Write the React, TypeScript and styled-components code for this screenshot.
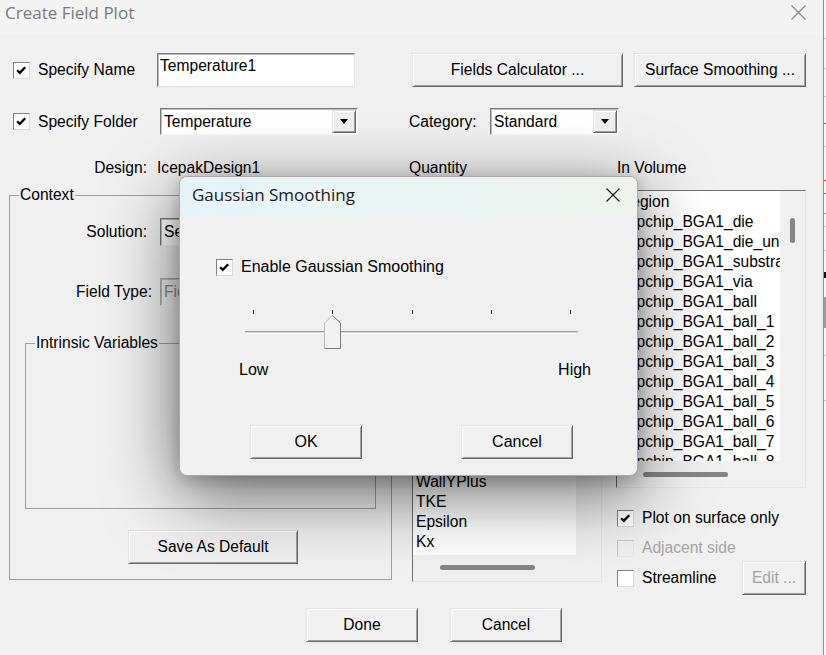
import React from "react";
import styled, { createGlobalStyle } from "styled-components";

const FONT = `"Liberation Sans", Arial, Helvetica, sans-serif`;
const TITLE_FONT = `"Open Sans", "Noto Sans", sans-serif`;

const GlobalStyle = createGlobalStyle`
  *, *::before, *::after { box-sizing: border-box; }
  html, body { margin: 0; padding: 0; background: #f0f0f0; }
  body { font-family: ${FONT}; }
`;

const Screen = styled.div`
  position: relative;
  width: 826px;
  height: 655px;
  display: flex;
  overflow: hidden;
  font-family: ${FONT};
  font-size: 15.6px;
  color: #000;
`;

const Window = styled.div`
  width: 824px;
  height: 100%;
  flex: none;
  display: flex;
  flex-direction: column;
  background: #f0f0f0;
  border-right: 1px solid #8e8e8e;
`;

const Backdrop = styled.svg`
  display: block;
  flex: none;
  background: #f7f7f7;
`;

const TitleBar = styled.div`
  flex: none;
  height: 35px;
  display: flex;
  align-items: flex-start;
  justify-content: space-between;
  padding: 2px 17px 0 5px;
  background: #f3f3f3;
`;

const WindowTitle = styled.div`
  font-family: ${TITLE_FONT};
  font-size: 17px;
  line-height: 22px;
  color: #7a7a7a;
`;

const XIcon = styled.svg<{ $mt?: number }>`
  display: block;
  flex: none;
  margin-top: ${(p) => p.$mt ?? 0}px;
`;

const Body = styled.div`
  flex: 1;
  display: flex;
  flex-direction: column;
`;

const Row = styled.div<{ $mt: number; $h: number; $pl?: number }>`
  flex: none;
  display: flex;
  align-items: center;
  height: ${(p) => p.$h}px;
  margin-top: ${(p) => p.$mt}px;
  padding-left: ${(p) => p.$pl ?? 0}px;
`;

const CheckField = styled.label<{ $w?: number; $ml?: number; $disabled?: boolean }>`
  flex: none;
  display: flex;
  align-items: center;
  gap: 8px;
  width: ${(p) => (p.$w ? `${p.$w}px` : "auto")};
  margin-left: ${(p) => p.$ml ?? 0}px;
  color: ${(p) => (p.$disabled ? "#a3a3a3" : "#000")};
  line-height: 18px;
  white-space: nowrap;
`;

const Box = styled.span<{ $disabled?: boolean }>`
  flex: none;
  width: 17px;
  height: 17px;
  display: flex;
  align-items: center;
  justify-content: center;
  background: ${(p) => (p.$disabled ? "#f0f0f0" : "#fff")};
  border: 1px solid;
  border-color: ${(p) =>
    p.$disabled ? "#c6c6c6 #e6e6e6 #e6e6e6 #c6c6c6" : "#828282 #dadada #dadada #828282"};
`;

const TextBox = styled.div<{ $w: number }>`
  flex: none;
  width: ${(p) => p.$w}px;
  height: 34px;
  background: #fff;
  border: 1px solid;
  border-color: #7a7a7a #e3e3e3 #e3e3e3 #7a7a7a;
  box-shadow: inset 1px 1px 0 #b9b9b9;
  padding: 3px 0 0 2px;
  line-height: 18px;
  white-space: nowrap;
`;

const Combo = styled.div<{ $w: number; $h: number; $ml?: number; $disabled?: boolean }>`
  flex: none;
  display: flex;
  width: ${(p) => p.$w}px;
  height: ${(p) => p.$h}px;
  margin-left: ${(p) => p.$ml ?? 0}px;
  padding: 1px;
  background: ${(p) => (p.$disabled ? "#f0f0f0" : "#fff")};
  border: 1px solid;
  border-color: ${(p) =>
    p.$disabled ? "#a8a8a8 #f4f4f4 #f4f4f4 #a8a8a8" : "#7a7a7a #f6f6f6 #f6f6f6 #7a7a7a"};
  box-shadow: inset 1px 1px 0 #bdbdbd;
`;

const ComboText = styled.span<{ $disabled?: boolean }>`
  flex: 1;
  display: flex;
  align-items: center;
  padding-left: 2px;
  overflow: hidden;
  white-space: nowrap;
  color: ${(p) => (p.$disabled ? "#8c8c8c" : "#000")};
`;

const DropButton = styled.span`
  flex: none;
  width: 24px;
  display: flex;
  align-items: center;
  justify-content: center;
  background: #f0f0f0;
  border: 1px solid;
  border-color: #e3e3e3 #696969 #696969 #e3e3e3;
  box-shadow: inset 1px 1px 0 #fff, inset -1px -1px 0 #a0a0a0;
`;

const Triangle = styled.span`
  width: 0;
  height: 0;
  border-left: 4px solid transparent;
  border-right: 4px solid transparent;
  border-top: 5px solid #000;
`;

const PushButton = styled.button<{
  $w: number;
  $ml?: number | "auto";
  $mt?: number;
  $disabled?: boolean;
}>`
  flex: none;
  width: ${(p) => p.$w}px;
  height: 34px;
  margin-top: ${(p) => p.$mt ?? 0}px;
  margin-left: ${(p) => (p.$ml === "auto" ? "auto" : `${p.$ml ?? 0}px`)};
  padding: 0;
  font-family: ${FONT};
  font-size: inherit;
  color: ${(p) => (p.$disabled ? "#a3a3a3" : "#000")};
  background: #f0f0f0;
  border: 1px solid;
  border-color: #e3e3e3 #696969 #696969 #e3e3e3;
  box-shadow: inset 1px 1px 0 #fff, inset -1px -1px 0 #a0a0a0;
  white-space: nowrap;
`;

const Text = styled.span<{ $w?: number; $ml?: number; $align?: "left" | "right"; $pr?: number }>`
  flex: none;
  width: ${(p) => (p.$w ? `${p.$w}px` : "auto")};
  margin-left: ${(p) => p.$ml ?? 0}px;
  padding-right: ${(p) => p.$pr ?? 0}px;
  text-align: ${(p) => p.$align ?? "left"};
  line-height: 18px;
  white-space: nowrap;
`;

const Main = styled.div`
  flex: none;
  display: flex;
  align-items: flex-start;
  height: 408px;
  margin-top: 8px;
`;

const Group = styled.fieldset<{ $w: number; $h: number; $ml: number; $mt: number }>`
  flex: none;
  margin: ${(p) => p.$mt}px 0 0 ${(p) => p.$ml}px;
  padding: 0;
  min-width: 0;
  width: ${(p) => p.$w}px;
  height: ${(p) => p.$h}px;
  border: 1px solid #a0a0a0;
  display: flex;
  flex-direction: column;
  align-items: flex-start;
`;

const Legend = styled.legend`
  margin-left: 9px;
  padding: 0 1px;
  font-size: 15.6px;
  line-height: 18px;
`;

const ListBox = styled.div<{ $h: number; $ml?: number; $mt?: number }>`
  flex: none;
  display: grid;
  grid-template-columns: 1fr 25px;
  grid-template-rows: 1fr 26px;
  width: 190px;
  height: ${(p) => p.$h}px;
  margin: ${(p) => p.$mt ?? 0}px 0 0 ${(p) => p.$ml ?? 0}px;
  background: #f0f0f0;
  border: 1px solid;
  border-color: #6d6d6d #e6e6e6 #e6e6e6 #6d6d6d;
`;

const ListContent = styled.div`
  background: #fff;
  overflow: hidden;
  padding: 1px 0 0 3px;
  line-height: 20px;
  white-space: nowrap;
`;

const Track = styled.div`
  min-width: 0;
  min-height: 0;
`;

const Thumb = styled.div<{ $w: number; $h: number; $ml: number; $mt: number }>`
  width: ${(p) => p.$w}px;
  height: ${(p) => p.$h}px;
  margin: ${(p) => p.$mt}px 0 0 ${(p) => p.$ml}px;
  border-radius: 3px;
  background: #858585;
`;

const RightColumn = styled.div`
  flex: none;
  width: 190px;
  margin: 4px 0 0 14px;
  display: flex;
  flex-direction: column;
`;

/* ---------- modal ---------- */

const Modal = styled.div`
  position: absolute;
  left: 179px;
  top: 176px;
  width: 459px;
  height: 300px;
  display: flex;
  flex-direction: column;
  font-size: 16px;
  background: #f0f0f0;
  border: 1px solid #a9a9a9;
  border-radius: 8px;
  overflow: hidden;
  box-shadow: 0 18px 70px rgba(0, 0, 0, 0.58), 0 4px 16px rgba(0, 0, 0, 0.2);
`;

const ModalTitle = styled.div`
  flex: none;
  height: 40px;
  display: flex;
  align-items: center;
  justify-content: space-between;
  padding: 0 17px 5px 12px;
  background: linear-gradient(90deg, #e5f3f7 0%, #eaf4f3 55%, #eff3ee 100%);
`;

const ModalTitleText = styled.div`
  font-family: ${TITLE_FONT};
  font-size: 17px;
  line-height: 22px;
  color: #1b1b1b;
`;

const ModalBody = styled.div`
  flex: 1;
  display: flex;
  flex-direction: column;
`;

const Slider = styled.div`
  position: relative;
  flex: none;
  width: 352px;
  margin: 33px 0 0 59px;
`;

const Ticks = styled.div`
  display: flex;
  justify-content: space-between;
  height: 4px;
  padding: 0 20px 0 14px;
`;

const Tick = styled.span`
  width: 1px;
  height: 4px;
  background: #333;
`;

const Groove = styled.div`
  width: 333px;
  height: 3px;
  margin: 17px 0 0 6px;
  background: #d6d6d6;
  border-top: 1px solid #9c9c9c;
  border-bottom: 1px solid #fff;
`;

const SliderThumb = styled.svg`
  position: absolute;
  left: 85px;
  top: 5px;
  display: block;
`;

const ScaleLabels = styled.div`
  flex: none;
  display: flex;
  justify-content: space-between;
  width: 352px;
  margin: 27px 0 0 59px;
  line-height: 18px;
`;

/* ---------- parts ---------- */

function Close({ size, color, mt }: { size: number; color: string; mt?: number }) {
  return (
    <XIcon $mt={mt} width={size} height={size} viewBox={`0 0 ${size} ${size}`}>
      <path
        d={`M0.5 0.5 L${size - 0.5} ${size - 0.5} M${size - 0.5} 0.5 L0.5 ${size - 0.5}`}
        stroke={color}
        strokeWidth="1.2"
        fill="none"
      />
    </XIcon>
  );
}

function Check({
  label,
  checked,
  disabled,
  w,
  ml,
}: {
  label: string;
  checked?: boolean;
  disabled?: boolean;
  w?: number;
  ml?: number;
}) {
  return (
    <CheckField $w={w} $ml={ml} $disabled={disabled}>
      <Box $disabled={disabled}>
        {checked && (
          <svg width="15" height="15" viewBox="0 0 15 15">
            <path d="M3.2 7.2 L5.8 9.8 L11.2 4.2" fill="none" stroke="#000" strokeWidth="2.3" />
          </svg>
        )}
      </Box>
      {label}
    </CheckField>
  );
}

function Select({
  value,
  w,
  h,
  ml,
  disabled,
}: {
  value: string;
  w: number;
  h: number;
  ml?: number;
  disabled?: boolean;
}) {
  return (
    <Combo $w={w} $h={h} $ml={ml} $disabled={disabled}>
      <ComboText $disabled={disabled}>{value}</ComboText>
      <DropButton>
        <Triangle />
      </DropButton>
    </Combo>
  );
}

const quantities = [
  "Temperature",
  "Pressure",
  "Speed",
  "Vector_Velocity",
  "X_Velocity",
  "Y_Velocity",
  "Z_Velocity",
  "Heat_Flux",
  "Heat_Tr_Coeff",
  "Surf_Heat_Flux",
  "Viscosity_Ratio",
  "Wall_Temperature",
  "Mesh_Quality",
  "Heat_Flow",
  "WallYPlus",
  "TKE",
  "Epsilon",
  "Kx",
];

const volumes = [
  "Region",
  "Flipchip_BGA1_die",
  "Flipchip_BGA1_die_underfill",
  "Flipchip_BGA1_substrate",
  "Flipchip_BGA1_via",
  "Flipchip_BGA1_ball",
  "Flipchip_BGA1_ball_1",
  "Flipchip_BGA1_ball_2",
  "Flipchip_BGA1_ball_3",
  "Flipchip_BGA1_ball_4",
  "Flipchip_BGA1_ball_5",
  "Flipchip_BGA1_ball_6",
  "Flipchip_BGA1_ball_7",
  "Flipchip_BGA1_ball_8",
  "Flipchip_BGA1_ball_9",
];

export default function App() {
  return (
    <>
      <GlobalStyle />
      <Screen>
        <Window>
          <TitleBar>
            <WindowTitle>Create Field Plot</WindowTitle>
            <Close size={15} color="#8a8a8a" mt={3} />
          </TitleBar>
          <Body>
            <Row $mt={18} $h={34}>
              <Check label="Specify Name" checked w={144} ml={13} />
              <TextBox $w={198}>Temperature1</TextBox>
              <PushButton $w={211} $ml={57}>
                Fields Calculator ...
              </PushButton>
              <PushButton $w={172} $ml={11}>
                Surface Smoothing ...
              </PushButton>
            </Row>
            <Row $mt={21} $h={27}>
              <Check label="Specify Folder" checked w={147} ml={13} />
              <Select value="Temperature" w={198} h={27} />
              <Text $w={81} $ml={51}>
                Category:
              </Text>
              <Select value="Standard" w={129} h={27} />
            </Row>
            <Row $mt={23} $h={20}>
              <Text $w={147} $align="right">
                Design:
              </Text>
              <Text $w={252} $ml={10}>
                IcepakDesign1
              </Text>
              <Text $w={208}>Quantity</Text>
              <Text>In Volume</Text>
            </Row>
            <Main>
              <Group $w={383} $h={394} $ml={9} $mt={0}>
                <Legend>Context</Legend>
                <Row $mt={14} $h={28}>
                  <Text $w={150} $align="right" $pr={13}>
                    Solution:
                  </Text>
                  <Select value="Setup1 : SteadyState" w={216} h={28} />
                </Row>
                <Row $mt={32} $h={28}>
                  <Text $w={150} $align="right" $pr={8}>
                    Field Type:
                  </Text>
                  <Select value="Fields" w={216} h={28} disabled />
                </Row>
                <Group $w={351} $h={175} $ml={15} $mt={28}>
                  <Legend>Intrinsic Variables</Legend>
                </Group>
                <PushButton $w={170} $ml={118} $mt={21}>
                  Save As Default
                </PushButton>
              </Group>

              <ListBox $h={392} $ml={20} $mt={4}>
                <ListContent>
                  {quantities.map((q) => (
                    <div key={q}>{q}</div>
                  ))}
                </ListContent>
                <Track>
                  <Thumb $w={5} $h={25} $ml={10} $mt={4} />
                </Track>
                <Track>
                  <Thumb $w={95} $h={5} $ml={27} $mt={10} />
                </Track>
                <Track />
              </ListBox>

              <RightColumn>
                <ListBox $h={298}>
                  <ListContent>
                    {volumes.map((v) => (
                      <div key={v}>{v}</div>
                    ))}
                  </ListContent>
                  <Track>
                    <Thumb $w={5} $h={25} $ml={10} $mt={27} />
                  </Track>
                  <Track>
                    <Thumb $w={85} $h={5} $ml={26} $mt={11} />
                  </Track>
                  <Track />
                </ListBox>
                <Row $mt={15} $h={30}>
                  <Check label="Plot on surface only" checked ml={1} />
                </Row>
                <Row $mt={0} $h={30}>
                  <Check label="Adjacent side" disabled ml={1} />
                </Row>
                <Row $mt={0} $h={30}>
                  <Check label="Streamline" ml={1} />
                  <PushButton $w={64} $ml="auto" $disabled>
                    Edit ...
                  </PushButton>
                </Row>
              </RightColumn>
            </Main>
            <Row $mt={14} $h={34} $pl={306}>
              <PushButton $w={112}>Done</PushButton>
              <PushButton $w={112} $ml={32}>
                Cancel
              </PushButton>
            </Row>
          </Body>
        </Window>
        <Backdrop width="2" height="655" viewBox="0 0 2 655">
          <g fill="#c4c4c4">
            <rect x="0" y="38" width="2" height="1" />
            <rect x="0" y="68" width="2" height="1" />
            <rect x="0" y="96" width="2" height="1" />
            <rect x="0" y="146" width="2" height="1" />
            <rect x="0" y="226" width="2" height="1" />
            <rect x="0" y="250" width="2" height="1" />
            <rect x="0" y="355" width="2" height="1" />
            <rect x="0" y="400" width="2" height="1" />
          </g>
          <g fill="#d23a3a">
            <rect x="0" y="123" width="2" height="1" />
            <rect x="0" y="180" width="2" height="1" />
            <rect x="0" y="193" width="2" height="1" />
          </g>
          <rect x="0" y="213" width="2" height="1" fill="#6bb36b" />
          <rect x="0" y="272" width="2" height="6" fill="#111" />
          <rect x="0" y="297" width="2" height="31" fill="#9c9c9c" />
        </Backdrop>

        <Modal>
          <ModalTitle>
            <ModalTitleText>Gaussian Smoothing</ModalTitleText>
            <Close size={14} color="#1b1b1b" />
          </ModalTitle>
          <ModalBody>
            <Row $mt={40} $h={20} $pl={36}>
              <Check label="Enable Gaussian Smoothing" checked />
            </Row>
            <Slider>
              <Ticks>
                <Tick />
                <Tick />
                <Tick />
                <Tick />
                <Tick />
              </Ticks>
              <Groove />
              <SliderThumb width="17" height="34" viewBox="0 0 17 34">
                <path d="M0.5 8 L8.5 0.5 L16.5 8 L16.5 33.5 L0.5 33.5 Z" fill="#f2f2f2" stroke="#b9b9b9" />
                <path d="M8.5 0.5 L16.5 8 L16.5 33.5 L0.5 33.5" fill="none" stroke="#7c7c7c" />
              </SliderThumb>
            </Slider>
            <ScaleLabels>
              <span>Low</span>
              <span>High</span>
            </ScaleLabels>
            <Row $mt={46} $h={34} $pl={70}>
              <PushButton $w={112}>OK</PushButton>
              <PushButton $w={112} $ml={99}>
                Cancel
              </PushButton>
            </Row>
          </ModalBody>
        </Modal>
      </Screen>
    </>
  );
}
